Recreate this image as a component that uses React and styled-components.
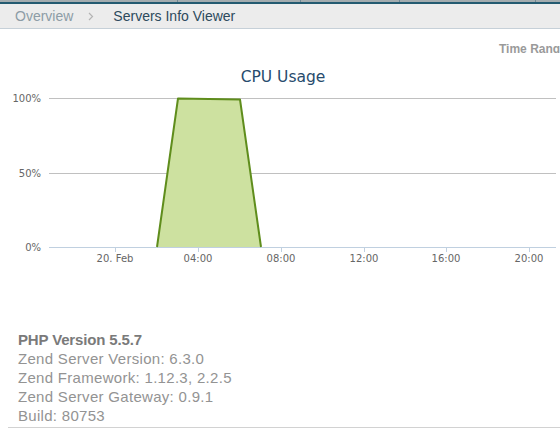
import React from "react";
import styled, { createGlobalStyle } from "styled-components";

const GlobalStyle = createGlobalStyle`
  html, body {
    margin: 0;
    padding: 0;
    background: #ffffff;
    font-family: "Liberation Sans", Arial, sans-serif;
    overflow: hidden;
  }
`;

const tabs = [177, 122, 98, 135, 40];

const plot = { left: 49, right: 556, top: 98, bottom: 247 };
const yTicks = [
    { label: "100%", y: 98 },
    { label: "50%", y: 173 },
    { label: "0%", y: 247 },
];
const xTicks = [
    { label: "20. Feb", x: 115 },
    { label: "04:00", x: 198 },
    { label: "08:00", x: 281 },
    { label: "12:00", x: 364 },
    { label: "16:00", x: 446 },
    { label: "20:00", x: 529 },
];
const series = [
    [157, 247],
    [178, 98.5],
    [240, 99.5],
    [261, 247],
];

const info = [
    "Zend Server Version: 6.3.0",
    "Zend Framework: 1.12.3, 2.2.5",
    "Zend Server Gateway: 0.9.1",
    "Build: 80753",
];

const CpuChart = () => {
    const d = "M" + series.map((p) => p.join(",")).join(" L");
    return (
        <StChart viewBox="0 60 560 230" width="560" height="230">
            <ChartTitle x="283" y="82" textAnchor="middle">CPU Usage</ChartTitle>

            {yTicks.map((t) => (
                <g key={t.label}>
                    <line
                        x1={plot.left}
                        x2={plot.right}
                        y1={t.y + 0.5}
                        y2={t.y + 0.5}
                        stroke={t.y === plot.bottom ? "#c0d0e0" : "#c0c0c0"}
                        strokeWidth="1"
                    />
                    <AxisLabel x="41" y={t.y + 4} textAnchor="end">{t.label}</AxisLabel>
                </g>
            ))}

            {xTicks.map((t) => (
                <g key={t.label}>
                    <line
                        x1={t.x + 0.5}
                        x2={t.x + 0.5}
                        y1={plot.bottom}
                        y2={plot.bottom + 5}
                        stroke="#c0d0e0"
                        strokeWidth="1"
                    />
                    <AxisLabel x={t.x} y="262" textAnchor="middle">{t.label}</AxisLabel>
                </g>
            ))}

            <path d={d + " Z"} fill="#cde1a0" stroke="none" />
            <path d={d} fill="none" stroke="#5f8d1c" strokeWidth="2" strokeLinejoin="round" />
        </StChart>
    );
};

const App = () => {
    return (
        <StPage>
            <GlobalStyle />

            <StTopStrip>
                {tabs.map((w, i) => (
                    <StTab key={i} $width={w} />
                ))}
            </StTopStrip>

            <StBreadcrumb>
                <StCrumb>Overview</StCrumb>
                <StChevron width="6" height="9" viewBox="0 0 6 9">
                    <path d="M1 1 L4.5 4.5 L1 8" fill="none" stroke="#b4b4b4" strokeWidth="1.2" />
                </StChevron>
                <StCrumb $current>Servers Info Viewer</StCrumb>
            </StBreadcrumb>

            <StToolbar>
                <StToolLabel>Time Range</StToolLabel>
            </StToolbar>

            <CpuChart />

            <StInfo>
                <StInfoTitle>PHP Version 5.5.7</StInfoTitle>
                {info.map((line) => (
                    <StInfoLine key={line}>{line}</StInfoLine>
                ))}
            </StInfo>
        </StPage>
    );
};

export default App;

const StPage = styled.div`
width: 560px;
height: 432px;
overflow: hidden;
`;

const StTopStrip = styled.div`
display: flex;
height: 2px;
background-color: #a3acaf;
border-bottom: 2px solid #235a70;
`;

const StTab = styled.div`
flex: 0 0 ${(p) => p.$width}px;
height: 100%;
border-right: 1px solid #6f8893;
`;

const StBreadcrumb = styled.div`
display: flex;
align-items: center;
height: 24px;
padding-left: 15px;
background-color: #ececec;
border-bottom: 1px solid #c6d0d8;
`;

const StCrumb = styled.span`
font-size: 14px;
color: ${(p) => (p.$current ? "#2c4a5c" : "#8d9ca6")};
white-space: nowrap;
`;

const StChevron = styled.svg`
margin: 0 19px 0 15px;
`;

const StToolbar = styled.div`
margin-top: 10px;
height: 14px;
padding-left: 499px;
overflow: hidden;
white-space: nowrap;
`;

const StToolLabel = styled.span`
font-size: 12px;
line-height: 14px;
font-weight: bold;
color: #9a9a9a;
`;

const StChart = styled.svg`
display: block;
margin-top: 7px;
font-family: "DejaVu Sans", Verdana, sans-serif;
`;

const ChartTitle = styled.text`
font-size: 15.5px;
fill: #274b6d;
`;

const AxisLabel = styled.text`
font-size: 10px;
fill: #666666;
`;

const StInfo = styled.div`
margin: 40px 0 0 8px;
padding: 0 0 2px 10px;
border-bottom: 1px solid #d2d2d2;
font-size: 15px;
line-height: 19px;
`;

const StInfoTitle = styled.div`
font-weight: bold;
letter-spacing: -0.15px;
color: #7a7a7a;
`;

const StInfoLine = styled.div`
letter-spacing: 0.3px;
color: #939393;
`;
